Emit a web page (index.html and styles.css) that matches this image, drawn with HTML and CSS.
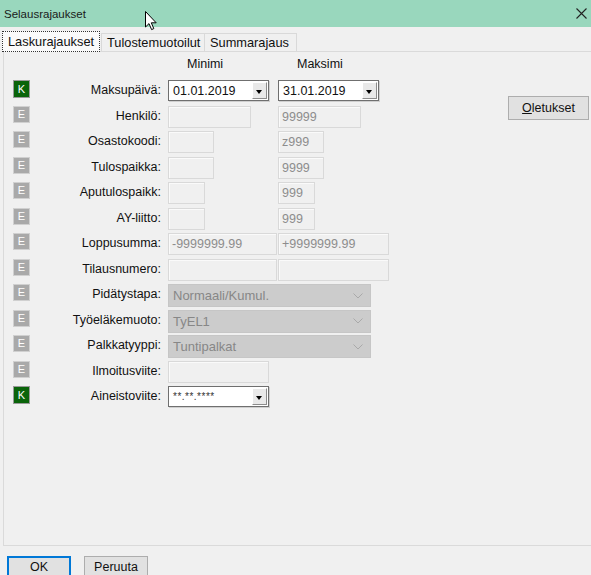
FILE: index.html
```html
<!DOCTYPE html>
<html lang="fi">
<head>
  <meta charset="UTF-8" />
  <title>Selausrajaukset</title>
  <link rel="stylesheet" href="styles.css">
</head>
<body>
  <div class="titlebar">
    <span class="title">Selausrajaukset</span>
    <svg class="close" width="11" height="11" viewBox="0 0 11 11">
      <path d="M0.5 0.5 L10.5 10.5 M10.5 0.5 L0.5 10.5" stroke="#222" stroke-width="1.1" fill="none"/>
    </svg>
    <svg class="cursor" width="13" height="20" viewBox="0 0 13 20">
      <path d="M0.5 0.5 L0.5 16 L4 12.6 L6.6 18.6 L8.8 17.6 L6.3 11.8 L11.2 11.8 Z" fill="#fff" stroke="#000" stroke-width="1"/>
    </svg>
  </div>

  <div class="tabs">
    <div class="tab active">Laskurajaukset</div>
    <div class="tab">Tulostemuotoilut</div>
    <div class="tab">Summarajaus</div>
  </div>

  <div class="panel">
    <div class="form">
      <div class="head"></div>
      <div class="head"></div>
      <div class="head col">Minimi</div>
      <div class="head col">Maksimi</div>

      <span class="badge k">K</span>
      <label>Maksupäivä:</label>
      <div class="combo"><span>01.01.2019</span><i class="drop"></i></div>
      <div class="combo"><span>31.01.2019</span><i class="drop"></i></div>

      <span class="badge">E</span>
      <label>Henkilö:</label>
      <div class="field w83"></div>
      <div class="field w83">99999</div>

      <span class="badge">E</span>
      <label>Osastokoodi:</label>
      <div class="field w46"></div>
      <div class="field w46">z999</div>

      <span class="badge">E</span>
      <label>Tulospaikka:</label>
      <div class="field w46"></div>
      <div class="field w46">9999</div>

      <span class="badge">E</span>
      <label>Aputulospaikk:</label>
      <div class="field w37"></div>
      <div class="field w37">999</div>

      <span class="badge">E</span>
      <label>AY-liitto:</label>
      <div class="field w37"></div>
      <div class="field w37">999</div>

      <span class="badge">E</span>
      <label>Loppusumma:</label>
      <div class="field w109">-9999999.99</div>
      <div class="field w111">+9999999.99</div>

      <span class="badge">E</span>
      <label>Tilausnumero:</label>
      <div class="field w109"></div>
      <div class="field w111"></div>

      <span class="badge">E</span>
      <label>Pidätystapa:</label>
      <div class="select">Normaali/Kumul.<svg width="10" height="6" viewBox="0 0 10 6"><path d="M0.5 0.5 L5 5 L9.5 0.5" stroke="#a9a9a9" fill="none"/></svg></div>

      <span class="badge">E</span>
      <label>Työeläkemuoto:</label>
      <div class="select">TyEL1<svg width="10" height="6" viewBox="0 0 10 6"><path d="M0.5 0.5 L5 5 L9.5 0.5" stroke="#a9a9a9" fill="none"/></svg></div>

      <span class="badge">E</span>
      <label>Palkkatyyppi:</label>
      <div class="select">Tuntipalkat<svg width="10" height="6" viewBox="0 0 10 6"><path d="M0.5 0.5 L5 5 L9.5 0.5" stroke="#a9a9a9" fill="none"/></svg></div>

      <span class="badge">E</span>
      <label>Ilmoitusviite:</label>
      <div class="field w101"></div>
      <div></div>

      <span class="badge k">K</span>
      <label>Aineistoviite:</label>
      <div class="combo"><span class="mask">**.**.****</span><i class="drop"></i></div>
      <div></div>
    </div>

    <div class="side">
      <button class="btn"><u>O</u>letukset</button>
    </div>
  </div>

  <div class="footer">
    <button class="btn default">OK</button>
    <button class="btn">Peruuta</button>
  </div>
</body>
</html>
```

FILE: styles.css
```css
body {
  margin: 0;
  width: 591px;
  height: 575px;
  overflow: hidden;
  background-color: #f0f0f0;
  font-family: 'Liberation Sans', Arial, sans-serif;
  font-size: 12.5px;
  color: #111;
}
.titlebar {
  position: relative;
  height: 27px;
  background-color: #99d7bd;
  display: flex;
  align-items: center;
  padding-left: 4px;
}
.title {
  font-size: 11.5px;
  color: #1a1a1a;
}
.close {
  margin-left: auto;
  margin-right: 4px;
}
.cursor {
  position: absolute;
  left: 145px;
  top: 11px;
}
.tabs {
  display: flex;
  align-items: flex-end;
  height: 20px;
  margin-top: 4px;
  padding-left: 2px;
  font-size: 12.8px;
}
.tab {
  line-height: 17px;
  padding: 0 5px;
  border: 1px solid #d9d9d9;
  border-bottom: none;
  box-sizing: border-box;
  height: 18px;
}
.tab.active {
  height: 21px;
  line-height: 19px;
  width: 98px;
  padding: 0 0 0 5px;
  border: 1px dotted #333;
  background-color: #fafafa;
  margin-bottom: -1px;
  position: relative;
  z-index: 1;
}
.tab:nth-child(2) {
  width: 104px;
  margin-left: 1px;
}
.tab:nth-child(3) {
  width: 92px;
  border-left: none;
}
.panel {
  margin-left: 3px;
  width: 600px;
  height: 495px;
  box-sizing: border-box;
  border: 1px solid #dadada;
  display: flex;
  padding-left: 9px;
}
.form {
  display: grid;
  grid-template-columns: 17px 138px 110px 111px;
  grid-template-rows: 28px;
  grid-auto-rows: 25.5px;
  align-items: start;
}
.head {
  padding-top: 4px;
  line-height: 16px;
}
.head.col {
  padding-left: 19px;
}
.head.col:last-child {
  padding-left: 18px;
}
label {
  text-align: right;
  padding-right: 7px;
  line-height: 21px;
  white-space: nowrap;
}
.badge {
  width: 17px;
  height: 17px;
  box-sizing: border-box;
  border: 1px solid #d0d0d0;
  background-color: #a9a9a9;
  color: #fff;
  font-size: 11px;
  line-height: 15px;
  text-align: center;
}
.badge.k {
  height: 18px;
  border-color: #9a9a9a;
  background-color: #0a640a;
  line-height: 16px;
}
.combo {
  width: 101px;
  height: 21px;
  box-sizing: border-box;
  border: 1px solid #6f6f6f;
  box-shadow: 1px 1px 0 #cfcfcf;
  background-color: #fff;
  display: flex;
  align-items: center;
  padding: 0 1px 0 4px;
}
.combo span {
  flex: 1;
}
.combo .mask {
  font-size: 10px;
  color: #333;
  letter-spacing: 0.5px;
}
.drop {
  position: relative;
  width: 15px;
  height: 17px;
  box-sizing: border-box;
  background-color: #e9e9e9;
  border: 1px solid;
  border-color: #fff #8c8c8c #8c8c8c #fff;
}
.drop::after {
  content: "";
  position: absolute;
  left: 3px;
  top: 7px;
  border-left: 3.5px solid transparent;
  border-right: 3.5px solid transparent;
  border-top: 4px solid #000;
}
.field {
  height: 22px;
  box-sizing: border-box;
  border: 1px solid #d9d9d9;
  box-shadow: inset 1px 1px 0 #fafafa;
  color: #8d8d8d;
  line-height: 20px;
  padding-left: 3px;
}
.w37 { width: 37px; }
.w46 { width: 46px; }
.w83 { width: 83px; }
.w101 { width: 101px; }
.w109 { width: 109px; }
.w111 { width: 111px; }
.select {
  grid-column: 3 / 5;
  width: 203px;
  height: 23px;
  box-sizing: border-box;
  border: 1px solid #c6c6c6;
  background-color: #cccccc;
  color: #878787;
  display: flex;
  align-items: center;
  justify-content: space-between;
  padding: 0 7px 0 4px;
  font-size: 13px;
}
.side {
  padding-top: 44px;
  margin-left: 119px;
}
.btn {
  font-family: inherit;
  font-size: 12.5px;
  color: #111;
  background-color: #e1e1e1;
  border: 1px solid #adadad;
  padding: 0;
  height: 24px;
}
.side .btn {
  width: 81px;
}
.footer {
  display: flex;
  gap: 13px;
  padding: 10px 0 0 7px;
}
.footer .btn {
  width: 64px;
  height: 22px;
}
.btn.default {
  border: 2px solid #0078d7;
}
```
